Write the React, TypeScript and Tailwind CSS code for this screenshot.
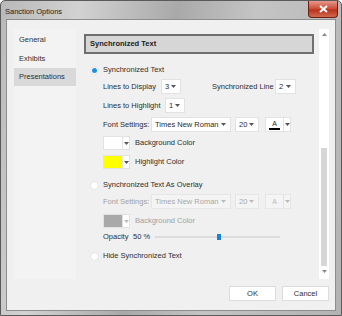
import React from "react";

const Arrow = ({ c = "#555" }: { c?: string }) => (
  <svg width="5" height="3" viewBox="0 0 5 3">
    <path d="M0 0h5L2.5 3z" fill={c} />
  </svg>
);

const Select = ({
  value,
  w,
  disabled = false,
}: {
  value: string;
  w: string;
  disabled?: boolean;
}) => (
  <div
    className={`flex items-center justify-between h-[15px] pl-[3px] pr-[4px] border whitespace-nowrap overflow-hidden ${
      disabled ? "bg-[#f4f4f4] border-[#e6e6e6] text-[#a8a8a8]" : "bg-white border-[#e2e2e2] text-[#2a2a2a]"
    } ${w}`}
  >
    <span>{value}</span>
    <Arrow c={disabled ? "#bbb" : "#555"} />
  </div>
);

const Swatch = ({ color, disabled = false }: { color: string; disabled?: boolean }) => (
  <div className="flex h-[14px] w-[27px] border border-[#e2e2e2] bg-white">
    <div className={`w-[18px] h-full ${color}`} />
    <div className="flex-1 flex items-center justify-center border-l border-[#e2e2e2]">
      <Arrow c={disabled ? "#bbb" : "#555"} />
    </div>
  </div>
);

const Radio = ({ checked, label }: { checked?: boolean; label: string }) => (
  <div className="flex items-center h-[12px] ml-[6px]">
    <div className="w-[9px] h-[9px] rounded-full bg-white border border-[#e4e4e4] flex items-center justify-center">
      {checked && <div className="w-[5px] h-[5px] rounded-full bg-[#2490dc]" />}
    </div>
    <span className="ml-[4px]">{label}</span>
  </div>
);

const ColorA = ({ disabled = false }: { disabled?: boolean }) => (
  <div
    className={`flex h-[15px] w-[26px] border ${
      disabled ? "border-[#e6e6e6] bg-[#f4f4f4]" : "border-[#e2e2e2] bg-white"
    }`}
  >
    <div className="w-[17px] flex flex-col items-center justify-center">
      <span
        className={`text-[7px] leading-[7px] ${disabled ? "text-[#b8b8b8]" : "text-[#1a1a1a]"}`}
      >
        A
      </span>
      {!disabled && <div className="w-[11px] h-[2px] bg-black mt-[1px]" />}
    </div>
    <div className="flex-1 flex items-center justify-center border-l border-[#e2e2e2]">
      <Arrow c={disabled ? "#bbb" : "#555"} />
    </div>
  </div>
);

export default function App() {
  return (
    <div
      className="w-[342px] h-[316px] flex flex-col overflow-hidden text-[7.5px] leading-none text-[#2e2e2e] whitespace-nowrap bg-[linear-gradient(100deg,#b9b9b9_0%,#d2d2d2_20%,#a9a9a9_45%,#c4c4c4_65%,#b3b3b3_100%)] border border-[#5a5a5a] rounded-t-[5px]"
      style={{ fontFamily: '"Liberation Sans", Arial, sans-serif' }}
    >
      {/* title bar */}
      <div className="h-[18px] flex items-start justify-between shrink-0">
        <span className="mt-[7px] ml-[4px] text-[#222]">Sanction Options</span>
        <div className="w-[30px] h-[17px] mr-[3px] rounded-b-[4px] border border-[#6d1d12] border-t-0 bg-[linear-gradient(#e4998b,#cc4a33_50%,#b8311c_55%,#d06a4e)] flex items-center justify-center">
          <svg width="9" height="8" viewBox="0 0 9 8">
            <path d="M1 1l7 6M8 1L1 7" stroke="#fff" strokeWidth="2" />
          </svg>
        </div>
      </div>

      {/* client area */}
      <div className="flex-1 mx-[5px] mb-[4px] border border-[#8d8d8d] bg-[#f0f0f0] flex flex-col">
        <div className="flex pt-[9px] h-[259px]">
          {/* nav */}
          <div className="ml-[7px] w-[62px] bg-[#f3f3f3] flex flex-col">
            <div className="h-[19px] pl-[5px] flex items-center mt-[1px]">General</div>
            <div className="h-[19px] pl-[5px] flex items-center">Exhibits</div>
            <div className="h-[18px] pl-[5px] flex items-center bg-[#d9d9d9]">Presentations</div>
          </div>

          {/* content */}
          <div className="ml-[3px] flex-1 flex">
            <div className="flex-1 flex flex-col pl-[5px]">
              <div className="mt-[5px] h-[20px] w-[230px] border-2 border-[#6f6f6f] bg-[#d6d6d6] flex items-center pl-[4px] font-bold text-[#1a1a1a]">
                Synchronized Text
              </div>

              <div className="mt-[10px]">
                <Radio checked label="Synchronized Text" />
              </div>

              <div className="mt-[3px] flex items-center h-[15px] pl-[19px]">
                <span className="w-[54px]">Lines to Display</span>
                <div className="ml-[4px]">
                  <Select value="3" w="w-[20px]" />
                </div>
                <span className="ml-[31px] w-[59px]">Synchronized Line</span>
                <div className="ml-[4px]">
                  <Select value="2" w="w-[21px]" />
                </div>
              </div>

              <div className="mt-[4px] flex items-center h-[15px] pl-[19px]">
                <span className="w-[58px]">Lines to Highlight</span>
                <div className="ml-[4px]">
                  <Select value="1" w="w-[20px]" />
                </div>
              </div>

              <div className="mt-[4px] flex items-center h-[15px] pl-[19px]">
                <span className="w-[45px]">Font Settings:</span>
                <div className="ml-[3px]">
                  <Select value="Times New Roman" w="w-[80px]" />
                </div>
                <div className="ml-[4px]">
                  <Select value="20" w="w-[24px]" />
                </div>
                <div className="ml-[6px]">
                  <ColorA />
                </div>
              </div>

              <div className="mt-[4px] flex items-center h-[14px] pl-[19px]">
                <Swatch color="bg-white" />
                <span className="ml-[5px]">Background Color</span>
              </div>

              <div className="mt-[5px] flex items-center h-[14px] pl-[19px]">
                <Swatch color="bg-[#ffff00]" />
                <span className="ml-[5px]">Highlight Color</span>
              </div>

              <div className="mt-[10px]">
                <Radio label="Synchronized Text As Overlay" />
              </div>

              <div className="mt-[3px] flex items-center h-[15px] pl-[19px]">
                <span className="w-[45px] text-[#a0a0a0]">Font Settings:</span>
                <div className="ml-[3px]">
                  <Select value="Times New Roman" w="w-[80px]" disabled />
                </div>
                <div className="ml-[4px]">
                  <Select value="20" w="w-[24px]" disabled />
                </div>
                <div className="ml-[6px]">
                  <ColorA disabled />
                </div>
              </div>

              <div className="mt-[5px] flex items-center h-[14px] pl-[19px]">
                <Swatch color="bg-[#a9a9a9]" disabled />
                <span className="ml-[5px] text-[#a0a0a0]">Background Color</span>
              </div>

              <div className="mt-[4px] flex items-center h-[10px] pl-[19px]">
                <span className="w-[26px]">Opacity</span>
                <span className="ml-[4px] w-[17px]">50 %</span>
                <div className="ml-[5px] relative w-[125px] h-[6px] flex items-center">
                  <div className="w-full h-[2px] bg-[#dcdcdc]" />
                  <div className="absolute left-[62px] top-0 w-[4px] h-[6px] bg-[#1e7fd8]" />
                </div>
              </div>

              <div className="mt-[8px]">
                <Radio label="Hide Synchronized Text" />
              </div>
            </div>

            {/* scrollbar */}
            <div className="w-[10px] mr-[6px] bg-white flex flex-col items-center">
              <div className="mt-[4px]">
                <svg width="5" height="3" viewBox="0 0 5 3">
                  <path d="M2.5 0L5 3H0z" fill="#888" />
                </svg>
              </div>
              <div className="mt-[112px] w-[6px] h-[118px] bg-[#d6d6d6]" />
              <div className="mt-[4px]">
                <Arrow c="#888" />
              </div>
            </div>
          </div>
        </div>

        {/* buttons */}
        <div className="flex justify-end mt-[7px] mr-[6px] gap-[6px]">
          <div className="w-[47px] h-[15px] bg-white border border-[#dcdcdc] flex items-center justify-center">
            OK
          </div>
          <div className="w-[47px] h-[15px] bg-white border border-[#dcdcdc] flex items-center justify-center">
            Cancel
          </div>
        </div>
      </div>
    </div>
  );
}
